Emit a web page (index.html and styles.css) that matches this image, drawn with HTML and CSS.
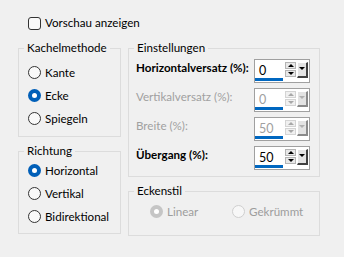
FILE: index.html
```html
<!DOCTYPE html>
<html lang="de">

<head>
    <meta charset="UTF-8">
    <meta name="viewport" content="width=device-width, initial-scale=1.0">
    <title>Kacheln</title>
    <link rel="stylesheet" href="styles.css">
</head>

<body>

    <div class="dialog">
        <!-- Vorschau -->
        <div class="check-row">
            <span class="checkbox"></span>
            <span>Vorschau anzeigen</span>
        </div>

        <div class="columns">
            <div class="col col-left">
                <fieldset class="group group-tile">
                    <legend>Kachelmethode</legend>
                    <div class="option"><span class="radio"></span>Kante</div>
                    <div class="option"><span class="radio checked"></span>Ecke</div>
                    <div class="option"><span class="radio"></span>Spiegeln</div>
                </fieldset>

                <fieldset class="group group-dir">
                    <legend>Richtung</legend>
                    <div class="option"><span class="radio checked"></span>Horizontal</div>
                    <div class="option"><span class="radio"></span>Vertikal</div>
                    <div class="option"><span class="radio"></span>Bidirektional</div>
                </fieldset>
            </div>

            <div class="col col-right">
                <fieldset class="group group-settings">
                    <legend>Einstellungen</legend>
                    <div class="field">
                        <span class="field-label">Horizontalversatz (%):</span>
                        <div class="spin">
                            <span class="spin-value">0</span>
                            <span class="spin-arrows"><span class="spin-btn up"></span><span class="spin-btn down"></span></span>
                            <span class="spin-drop"></span>
                        </div>
                    </div>
                    <div class="field disabled">
                        <span class="field-label">Vertikalversatz (%):</span>
                        <div class="spin">
                            <span class="spin-value">0</span>
                            <span class="spin-arrows"><span class="spin-btn up"></span><span class="spin-btn down"></span></span>
                            <span class="spin-drop"></span>
                        </div>
                    </div>
                    <div class="field disabled">
                        <span class="field-label">Breite (%):</span>
                        <div class="spin">
                            <span class="spin-value">50</span>
                            <span class="spin-arrows"><span class="spin-btn up"></span><span class="spin-btn down"></span></span>
                            <span class="spin-drop"></span>
                        </div>
                    </div>
                    <div class="field">
                        <span class="field-label">Übergang (%):</span>
                        <div class="spin">
                            <span class="spin-value">50</span>
                            <span class="spin-arrows"><span class="spin-btn up"></span><span class="spin-btn down"></span></span>
                            <span class="spin-drop"></span>
                        </div>
                    </div>
                </fieldset>

                <fieldset class="group group-corner">
                    <legend>Eckenstil</legend>
                    <div class="option-row">
                        <div class="option disabled option-linear"><span class="radio checked"></span>Linear</div>
                        <div class="option disabled"><span class="radio"></span>Gekrümmt</div>
                    </div>
                </fieldset>
            </div>
        </div>
    </div>

</body>

</html>
```

FILE: styles.css
```css
body {
    font-family: 'Lato', 'Noto Sans', sans-serif;
    font-size: 11.6px;
    line-height: 16px;
    margin: 0;
    padding: 0;
    background-color: #f0f0f0;
    color: #000;
}

.dialog {
    padding: 15px 0 0 18px;
}

/* Checkbox */
.check-row {
    display: flex;
    align-items: center;
    gap: 4px;
    margin-left: 10px;
    height: 16px;
}

.checkbox {
    flex-shrink: 0;
    width: 13px;
    height: 13px;
    box-sizing: border-box;
    border: 1px solid #333;
    border-radius: 3px;
    background: #f9f9f9;
}

/* Spalten */
.columns {
    display: flex;
    gap: 7px;
    margin-top: 9px;
}

.col {
    display: flex;
    flex-direction: column;
    gap: 6px;
}

.col-left {
    width: 103px;
}

.col-right {
    width: 192px;
}

.group {
    margin: 0;
    min-width: 0;
    border: 1px solid #dcdcdc;
    padding: 0 7px;
}

.group legend {
    padding: 0 3px;
    margin-left: -2px;
    line-height: 16px;
}

.group-tile {
    padding-top: 5px;
    padding-bottom: 6px;
}

.group-dir {
    padding-top: 0;
    padding-bottom: 5px;
}

.group-settings {
    display: flex;
    flex-direction: column;
    gap: 5px;
    padding-top: 3px;
    padding-bottom: 6px;
    padding-right: 9px;
}

.group-corner {
    padding-top: 1px;
    padding-bottom: 12px;
}

/* Radios */
.option {
    display: flex;
    align-items: center;
    gap: 4px;
    height: 23px;
    margin-left: 2px;
    white-space: nowrap;
}

.option-row {
    display: flex;
    margin-left: 14px;
}

.option-row .option {
    margin-left: 0;
}

.option-linear {
    width: 82px;
}

.radio {
    flex-shrink: 0;
    width: 13px;
    height: 13px;
    box-sizing: border-box;
    border: 1px solid #333;
    border-radius: 50%;
    background: #f9f9f9;
    display: flex;
    align-items: center;
    justify-content: center;
}

.radio.checked {
    border: none;
    background: #005fb8;
}

.radio.checked::after {
    content: "";
    width: 5px;
    height: 5px;
    border-radius: 50%;
    background: #fff;
}

.option.disabled {
    color: #9d9d9d;
}

.option.disabled .radio {
    border-color: #cfcfcf;
    background: #f7f7f7;
}

.option.disabled .radio.checked {
    background: #c5c5c5;
}

/* Felder mit Drehregler */
.field {
    display: flex;
    justify-content: space-between;
    align-items: flex-start;
    height: 24px;
}

.field-label {
    font-weight: bold;
    margin-top: 1px;
    white-space: nowrap;
}

.field.disabled .field-label {
    font-weight: normal;
    color: #a0a0a0;
}

.spin {
    flex-shrink: 0;
    display: flex;
    align-items: flex-start;
    width: 56px;
    height: 24px;
    box-sizing: border-box;
    border: 1px solid #a0a0a0;
    background: #fff;
}

.spin-value {
    width: 28px;
    height: 21px;
    box-sizing: border-box;
    padding: 3px 0 0 4px;
    border-bottom: 3px solid #0067c0;
    line-height: 16px;
    font-size: 12.5px;
}

.spin-arrows {
    display: flex;
    flex-direction: column;
    gap: 1px;
    margin: 2px 0 0 2px;
}

.spin-btn {
    width: 11px;
    height: 7px;
    box-sizing: border-box;
    border: 1px solid #b4b4b4;
    background: #e8e8e8;
    display: flex;
    align-items: center;
    justify-content: center;
}

.spin-btn::after {
    content: "";
    border-left: 3px solid transparent;
    border-right: 3px solid transparent;
}

.spin-btn.up::after {
    border-bottom: 3px solid #000;
}

.spin-btn.down::after {
    border-top: 3px solid #000;
}

.spin-drop {
    width: 11px;
    height: 16px;
    margin: 2px 0 0 1px;
    box-sizing: border-box;
    background: #e3e3e3;
    border-top: 1px solid #fff;
    border-left: 1px solid #fff;
    border-right: 2px solid #404040;
    border-bottom: 2px solid #404040;
    display: flex;
    justify-content: center;
    padding-top: 4px;
}

.spin-drop::after {
    content: "";
    height: 0;
    border-left: 3px solid transparent;
    border-right: 3px solid transparent;
    border-top: 3px solid #000;
}

.field.disabled .spin-value {
    color: #a0a0a0;
}

.field.disabled .spin-btn {
    border-color: #d4d4d4;
    background: #f0f0f0;
}

.field.disabled .spin-btn.up::after {
    border-bottom-color: #a8a8a8;
}

.field.disabled .spin-btn.down::after {
    border-top-color: #a8a8a8;
}

.field.disabled .spin-drop {
    border-right-color: #8a8a8a;
    border-bottom-color: #8a8a8a;
}

.field.disabled .spin-drop::after {
    border-top-color: #b0b0b0;
}
```
